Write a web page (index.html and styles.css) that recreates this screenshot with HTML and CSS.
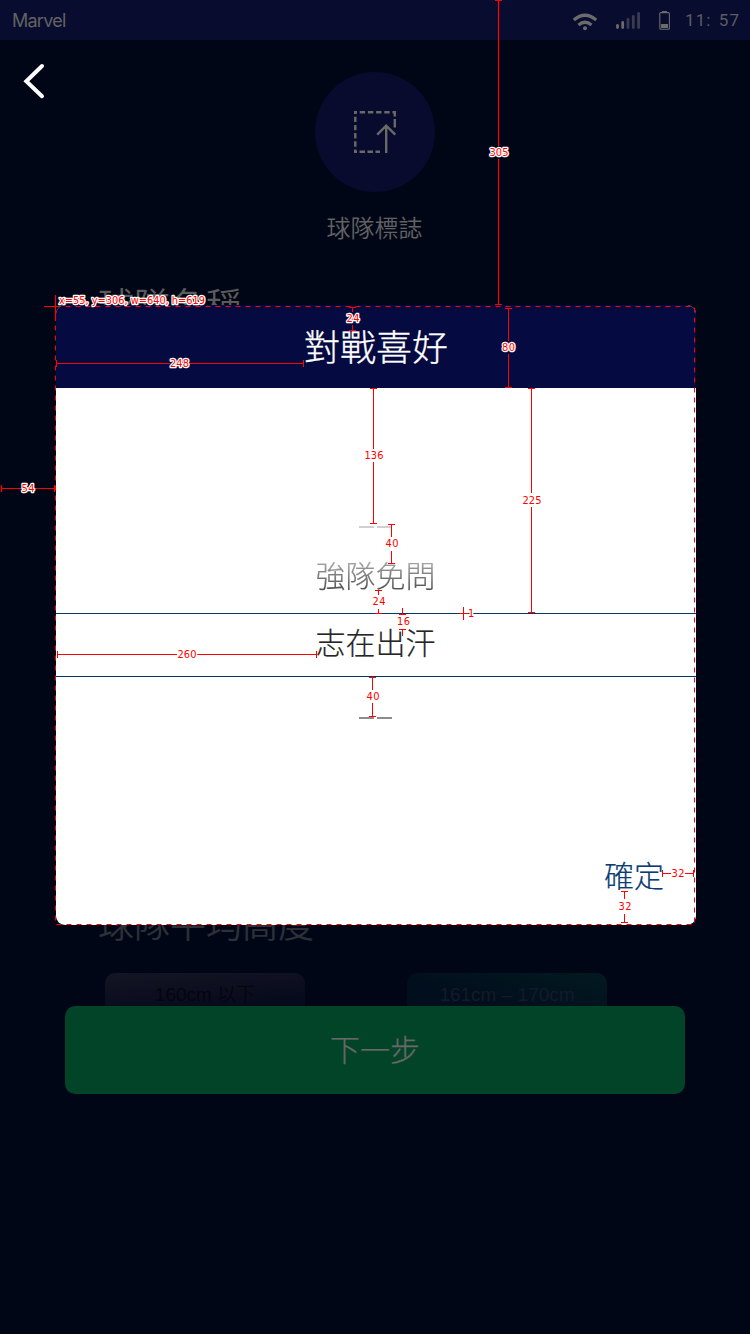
FILE: index.html
```html
<!DOCTYPE html>
<html lang="zh-Hant">
<head>
<meta charset="utf-8">
<title>對戰喜好</title>
<link rel="stylesheet" href="styles.css">
</head>
<body>
<div class="screen">
  <header class="status">
    <span class="carrier">Marvel</span>
    <svg class="status-icons" width="88" height="40" viewBox="572 0 88 40">
      <g fill="none" stroke="#6b6b6b" stroke-width="3.2">
        <path d="M573.8 20Q585 10.5 596.2 20"/>
        <path d="M578.5 25Q585 19.5 591.5 25"/>
      </g>
      <circle cx="585" cy="28.2" r="2" fill="#6b6b6b"/>
      <g stroke-width="2.8" stroke-linecap="round">
        <path d="M617.5 25.5v2M622.7 22.5v5" stroke="#6b6b6b"/>
        <path d="M628 19.5v8M633.3 16.5v11M638.6 13.5v14" stroke="#393b50"/>
      </g>
    </svg>
    <svg class="battery" width="12" height="40" viewBox="659 0 12 40">
      <rect x="659.8" y="12.6" width="9.6" height="16.6" rx="1" fill="none" stroke="#6b6b6b" stroke-width="1.1"/>
      <path d="M662 11h5v1.5h-5zM661 24h7v4h-7z" fill="#6b6b6b"/>
    </svg>
    <span class="clock">11: 57</span>
  </header>

  <main class="form">
    <div class="logo-row">
      <svg class="back" width="24" height="38" viewBox="22 62 24 38">
        <path d="M42 66L26.3 81.2L42 96.2" fill="none" stroke="#fff" stroke-width="4" stroke-linecap="round"/>
      </svg>
      <div class="logo">
        <svg width="46" height="46" viewBox="352 109 46 46" fill="none" stroke="#696966" stroke-width="2.4">
          <path d="M354 112.3H396" stroke-dasharray="5.4 2.8" stroke-dashoffset="2.5"/>
          <path d="M355.3 111V153" stroke-dasharray="5.4 2.8" stroke-dashoffset="2.5"/>
          <path d="M354 151.8H380" stroke-dasharray="5.5 2.5" stroke-dashoffset="2.5"/>
          <path d="M394.8 111V116.5M394.8 119V127.5"/>
          <path d="M386.2 153V126M377.2 134.7L386.2 125.7L395.3 134.7"/>
        </svg>
      </div>
    </div>
    <p class="logo-label">球隊標誌</p>
    <h2 class="field name">球隊名稱</h2>
    <h2 class="field height">球隊平均高度</h2>
    <div class="cards">
      <div class="card low">160cm 以下</div>
      <div class="card mid">161cm – 170cm</div>
    </div>
  </main>
  <div class="next">下一步</div>

  <section class="dialog">
    <h1 class="dialog-title">對戰喜好</h1>
    <div class="picker">
      <div class="edge edge-top"><i></i><i></i></div>
      <div class="option faded">強隊免問</div>
      <div class="option chosen">志在出汗</div>
      <div class="edge edge-bottom"><i></i><i></i></div>
    </div>
    <div class="confirm">確定</div>
  </section>

  <svg class="measures" width="750" height="1334" viewBox="0 0 750 1334">
    <rect class="outline" x="55.5" y="306.5" width="639" height="618"/>
    <g class="thick">
      <path d="M498.5 0V146M498.5 159V304M495 .5h7M495 304.5h7"/>
      <path d="M1 488.5H21M35 488.5H55M1.5 485v7M54.5 485v7"/>
      <path d="M44 306.5H56M55.5 295V321"/>
    </g>
    <path class="line" d="M352.5 307V312M352.5 325V330M349 307.5h7M349 330.5h7
      M508.5 308V341M508.5 354V387M505 308.5h7M505 387.5h7
      M56.5 360v7M303.5 360v7M57 363.5H170M189 363.5H303
      M373.5 388V449M373.5 462V523M370 388.5h7M370 523.5h7
      M531.5 388V493M531.5 507V612M528 388.5h7M528 612.5h7
      M391.5 524V537M391.5 551V563M388 524.5h7M388 563.5h7
      M378.5 590V595M378.5 609V613M375 590.5h7M375 613.5h7
      M463.5 607V620M459 613.5h9
      M402.5 608V614M402.5 629V636M399 614.5h7M399 629.5h7
      M57.5 651v7M316.5 651v7M58 654.5H177M196 654.5H316
      M372.5 677V690M372.5 703V717M369 677.5h7M369 716.5h7
      M662.5 870v7M693.5 870v7M663 873.5H671M685 873.5H693
      M624.5 891V899M624.5 914V922M621 891.5h7M621 922.5h7"/>
    <g class="num">
      <text x="59" y="304" textLength="146" lengthAdjust="spacingAndGlyphs">x=55, y=306, w=640, h=619</text>
      <text x="489.5" y="156" textLength="19">305</text>
      <text x="21.5" y="492" textLength="13">54</text>
      <text x="346.5" y="322" textLength="13">24</text>
      <text x="502" y="351" textLength="13">80</text>
      <text x="170" y="367" textLength="19">248</text>
      <text x="364.5" y="459" textLength="19">136</text>
      <text x="522.5" y="504" textLength="19">225</text>
      <text x="385.5" y="547" textLength="13">40</text>
      <text x="372.5" y="605" textLength="13">24</text>
      <text x="397" y="625" textLength="13">16</text>
      <text x="468" y="617">1</text>
      <text x="177.5" y="658" textLength="19">260</text>
      <text x="366.5" y="700" textLength="13">40</text>
      <text x="671.5" y="877" textLength="13">32</text>
      <text x="618.5" y="910" textLength="13">32</text>
    </g>
  </svg>
</div>
</body>
</html>
```
FILE: styles.css
```css
* { box-sizing: border-box; margin: 0; padding: 0; }

body { background: #010617; }

.screen {
  position: relative;
  width: 750px;
  height: 1334px;
  overflow: hidden;
  background: #010617;
  font-family: "Noto Sans CJK TC", sans-serif;
  font-weight: 350;
  color: #626262;
}

.status {
  display: flex;
  align-items: center;
  height: 40px;
  padding: 0 10px 0 12px;
  background: #080c2e;
  font-family: Inter, "Liberation Sans", sans-serif;
}
.carrier { flex: 1; font-size: 18px; font-weight: 400; letter-spacing: -0.75px; }
.battery { margin: 0 14px 0 -1px; }
.clock { width: 55px; font-family: Roboto, "Liberation Sans", sans-serif; font-size: 17px; font-weight: 400; letter-spacing: 1.1px; word-spacing: 2px; white-space: pre; color: #5d5d62; }

.form { height: 966px; overflow: hidden; }
.logo-row {
  display: grid;
  grid-template-columns: 24px 1fr 24px;
  padding: 22px 22px 0;
}
.logo {
  display: flex;
  align-items: center;
  justify-content: center;
  justify-self: center;
  width: 120px;
  height: 120px;
  margin-top: 10px;
  border-radius: 50%;
  background: #080b2d;
}
.logo-label { margin-top: 17px; padding-right: 1px; font-size: 24px; line-height: 36px; text-align: center; }
.field { padding-left: 98px; font-size: 36px; line-height: 50px; font-weight: 350; color: #5b5b5b; }
.name { margin-top: 33px; }
.height { margin-top: 569px; color: #2d3037; }
.cards { display: flex; gap: 102px; margin-top: 26px; padding-left: 105px; }
.card {
  width: 200px;
  height: 70px;
  padding-top: 9px;
  border-radius: 10px;
  font-family: "Liberation Sans", "Noto Sans CJK TC", sans-serif;
  font-size: 19px;
  line-height: 26px;
  text-align: center;
  white-space: nowrap;
}
.low { background: linear-gradient(175deg, #141524, #060a1c 50%); color: #03050f; }
.mid { background: linear-gradient(195deg, #021a1f, #010e1d 50%); color: #141a2a; }

.next {
  height: 88px;
  margin: 0 65px;
  border-radius: 10px;
  background: #014428;
  font-size: 30px;
  font-weight: 300;
  -webkit-text-stroke: 0.25px;
  line-height: 84px;
  text-align: center;
  color: #686868;
}

.dialog {
  position: absolute;
  top: 305px;
  left: 56px;
  width: 640px;
  height: 620px;
  display: flex;
  flex-direction: column;
  overflow: hidden;
  border-radius: 9px;
  background: #fff;
}
.dialog-title {
  height: 83px;
  background: #050a41;
  font-size: 36px;
  font-weight: 300;
  -webkit-text-stroke: 0.3px;
  line-height: 81px;
  text-align: center;
  color: #fff;
}
.picker { flex: 1; }
.edge { display: flex; justify-content: center; gap: 3px; padding-right: 2px; }
.edge i { width: 15px; height: 2px; }
.edge-top { margin-top: 138px; }
.edge-top i { background: #d0d0d0; }
.edge-bottom { margin-top: 40px; }
.edge-bottom i { background: #8c8c8c; }
.option { padding-right: 1px; font-size: 30px; font-weight: 300; -webkit-text-stroke: 0.2px; text-align: center; }
.faded {
  height: 85px;
  padding-top: 23px;
  line-height: 46px;
  color: transparent;
  background: linear-gradient(#aaa 33px, #505050 61px);
  -webkit-background-clip: text;
  background-clip: text;
}
.chosen {
  height: 64px;
  border-top: 1px solid #073763;
  border-bottom: 1px solid #073763;
  line-height: 55px;
  color: #262626;
}
.confirm { padding: 0 32px 28px 0; font-size: 30px; font-weight: 300; -webkit-text-stroke: 0.2px; line-height: 46px; text-align: right; color: #0b3c73; }

.measures { position: absolute; top: 0; left: 0; fill: none; stroke: #f00; }
.outline { stroke-dasharray: 5 5; }
.thick { stroke-width: 1.2; }
.line { shape-rendering: crispEdges; }
.num {
  font-family: "DejaVu Sans Condensed", "DejaVu Sans", sans-serif;
  font-size: 11px;
  font-weight: 400;
  fill: #f00;
  stroke: #fff;
  stroke-width: 2.5px;
  stroke-linejoin: round;
  paint-order: stroke;
}
```
